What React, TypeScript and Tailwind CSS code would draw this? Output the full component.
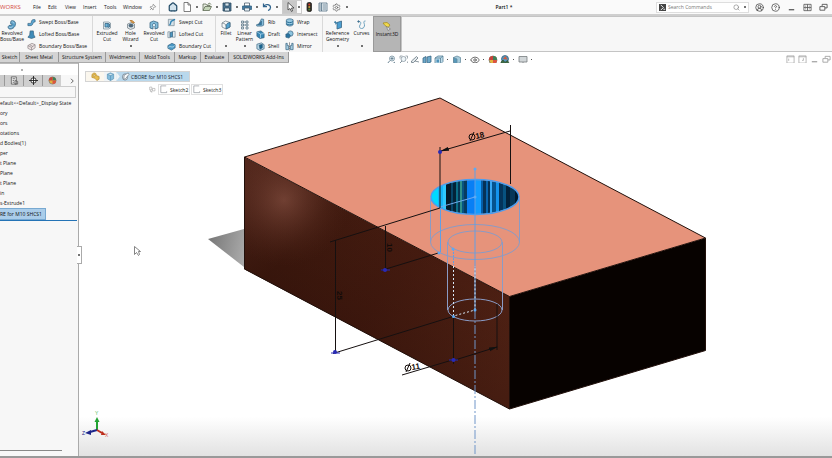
import React from "react";
import { House, Pin, Search, CircleUserRound, CircleHelp, Settings, Eye } from "lucide-react";

type Kids = { children?: React.ReactNode };

function Glyph({ children, size = "size-[10px]" }: Kids & { size?: string }) {
  return (
    <svg viewBox="0 0 20 20" className={`${size} shrink-0`} fill="none" stroke="#33607f" strokeWidth="1.5" aria-hidden="true">
      {children}
    </svg>
  );
}

const art: Record<string, React.ReactNode> = {
  revolve: (
    <>
      <path d="M8 2c5-2 10 1 9 7s-7 10-12 9c-3-1-4-5-1-7l6-1c1-2-2-2-3-3z" fill="#5c9fc6" />
      <path d="M9 4c3-1 5 1 5 3M4 14c2 2 5 1 7-1" stroke="#c6e4f5" />
    </>
  ),
  sweep: <path d="M2 17v-5h6c2 0 1-5 3-7s5-2 7-1v5c-4 0-4 1-5 4s-3 4-6 4z" fill="#5aa5d0" />,
  loft: <path d="M7 2h7l1 9 3 5-8 3-8-3 4-5z" fill="#3f8bb8" />,
  boundary: (
    <>
      <path d="M2 8l9-5 7 3v7l-8 5-8-4z" fill="#eee4e4" stroke="#8b8184" />
      <path d="M2 8l8 4 8-6M10 12v6M6 6l7 4" stroke="#8b8184" />
    </>
  ),
  extrudeCut: (
    <>
      <path d="M3 4h10l4 2v10l-4 2H3z" fill="#e6edf1" stroke="#7b8d99" />
      <path d="M6 7h6v7H6zM12 7l3 1v6l-3 1" fill="#6cb4db" />
    </>
  ),
  wizard: (
    <>
      <path d="M3 8l8-3 6 3v8l-8 3-6-3z" fill="#d9dee1" stroke="#75818a" />
      <ellipse cx="10" cy="11" rx="4" ry="3" fill="#57636d" />
      <path d="M8 1l5 5 4-1-5-4z" fill="#eda84c" stroke="#a86d26" />
    </>
  ),
  revolveCut: (
    <>
      <path d="M2 5l7-3 9 3v11l-6 2v-5H8v5l-6-2z" fill="#83bddb" />
      <path d="M8 13c-2-3-1-6 2-6s4 3 2 6" fill="#e6f4fb" />
    </>
  ),
  sweepCut: (
    <>
      <path d="M3 3h13v14H3z" fill="#d5e2e9" stroke="#71848f" />
      <path d="M5 15c4 0 2-6 5-8s4-2 8-4" stroke="#2f83b4" strokeWidth="3" />
    </>
  ),
  loftCut: (
    <>
      <path d="M2 4h5v13H2zM12 3h6v13h-6z" fill="#e6eef2" stroke="#718694" />
      <path d="M7 6l5-2v11l-5 1z" fill="#4f9bc6" />
    </>
  ),
  boundaryCut: (
    <>
      <path d="M2 8l9-5 7 3v7l-8 5-8-4z" fill="#4c9ac6" />
      <path d="M3 12c5-5 8 3 14-4" stroke="#d8eff9" />
    </>
  ),
  fillet: (
    <>
      <path d="M2 6l7-4 9 3v9l-8 4-8-4z" fill="#f4f7f8" stroke="#717f88" />
      <path d="M10 18V12c0-4 3-6 8-7v9z" fill="#55a4d1" />
      <path d="M2 6c5 1 8 2 8 6" stroke="#717f88" />
    </>
  ),
  pattern: (
    <>
      {[3, 12].map((x) => [2, 8, 14].map((y) => <path key={`${x}-${y}`} d={`M${x} ${y}h4v4h-4z`} fill="#e8eff3" stroke="#5a7384" />))}
      <path d="M7 4h5M7 10h5" stroke="#5a7384" />
    </>
  ),
  rib: (
    <>
      <path d="M12 2l5 1v13l-4 2H2l-1-3 6-2z" fill="#85bddb" />
      <path d="M5 15l7-8v8z" fill="#2c7dad" />
    </>
  ),
  draft: (
    <>
      <path d="M2 4l9-2 7 6v9l-9 2-7-5z" fill="#3686b4" />
      <path d="M2 4l8 5 8-1M10 9v9" stroke="#bfe0f1" />
    </>
  ),
  shell: (
    <>
      <path d="M2 5l10-3 6 4v9l-9 4-7-4z" fill="#b9d7e6" />
      <path d="M7 7l7-2v8l-5 3z" fill="#18658f" />
    </>
  ),
  wrap: (
    <>
      <path d="M3 4c4-3 11-3 15 0v11c-4 4-11 4-15 0z" fill="#97c8e1" />
      <path d="M3 8c5 3 10 3 15 0M3 13c5 3 10 3 15 0" stroke="#1c648d" strokeWidth="2" />
    </>
  ),
  intersect: (
    <>
      <circle cx="12" cy="8" r="6" fill="#8dc4df" />
      <path d="M2 9l6-1 4 4-3 6-7-2z" fill="#2873a0" />
    </>
  ),
  mirror: (
    <>
      <path d="M2 3h3v5h3v9H2zM18 3h-3v5h-3v9h6z" fill="#a7cde0" />
      <path d="M10 1v18" stroke="#444" strokeDasharray="3 1" />
    </>
  ),
  reference: (
    <>
      <path d="M8 5l9-3v13l-9 3z" fill="#4c9ed0" />
      <path d="M5 2v7M2 5h7M3 3l5 5" stroke="#397ba1" />
    </>
  ),
  curves: (
    <>
      <path d="M3 3c6 0 5 4 3 7s-1 7 3 7M17 2c-6 0-2 5-2 8s-1 7-6 7" stroke="#6aa0bd" strokeWidth="2" />
      <circle cx="3" cy="3" r="1.5" fill="#4c8eb3" />
    </>
  ),
  instant: (
    <>
      <path d="M2 4l8-1 6 5-4 5-6-4z" fill="#f1d94d" stroke="#a18b20" />
      <path d="M9 11l8 5-5 3z" fill="#f6f6f6" stroke="#7a7a7a" />
    </>
  ),
  page: <path d="M4 1h8l5 5v13H4zM12 1v5h5" fill="#fff" stroke="#555" />,
  open: (
    <>
      <path d="M2 17V4h6l2 3h6v3" fill="#e9eee3" stroke="#59654f" />
      <path d="M2 17l4-8h13l-4 8zM11 5l4-3 3 3" fill="#c5d6b9" stroke="#59654f" />
    </>
  ),
  save: (
    <>
      <path d="M2 2h16v16H2z" fill="#4b7695" stroke="#28465b" />
      <path d="M6 2h8v6H6zM5 12h10v6H5z" fill="#d8e5ed" stroke="#28465b" />
    </>
  ),
  print: (
    <>
      <path d="M5 2h10v6H5z" fill="#fff" stroke="#456" />
      <path d="M1 8h18v7H1z" fill="#417ba3" />
      <path d="M5 12h10v6H5z" fill="#e8f1f6" stroke="#456" />
    </>
  ),
  undo: <path d="M3 3v6h7M4 8c4-5 13-3 13 3 0 3-2 5-5 6" stroke="#31648d" strokeWidth="2.5" />,
  cursor: <path d="M6 1v15l4-3 3 6 2-1-2-6h5z" fill="#fff" stroke="#333" />,
  light: (
    <>
      <rect x="6" y="1" width="9" height="18" rx="3" fill="#332e25" stroke="#222" />
      <circle cx="10.500" cy="5" r="2" fill="#d83a2a" stroke="none" />
      <circle cx="10.500" cy="10" r="2" fill="#c39a35" stroke="none" />
      <circle cx="10.500" cy="15" r="2" fill="#4d8b40" stroke="none" />
    </>
  ),
  list: <path d="M2 2h16v16H2zM7 2v16M9 6h7M9 10h7M9 14h7M3 6h3M3 10h3M3 14h3" fill="#eef4f7" stroke="#48677c" />,
  zoomFit: (
    <>
      <circle cx="12" cy="7" r="5" fill="#e9f4f9" stroke="#6c8594" />
      <path d="M8 11l-6 7M12 4v6M9 7h6M14 17l4-3" stroke="#6c8594" strokeWidth="2" />
    </>
  ),
  zoomArea: (
    <>
      <path d="M4 7V2h5M15 2h4v5M19 13v5" stroke="#87939b" />
      <circle cx="11" cy="8" r="5" fill="#eff6f9" stroke="#84939d" />
      <path d="M8 12l-6 6" stroke="#84939d" strokeWidth="2" />
    </>
  ),
  previous: <path d="M3 12l10-9 3 3-9 9H3zM2 18h16M10 12l8 2" fill="#e3e9ec" stroke="#61717c" />,
  section: <path d="M2 6l6-3v12l-6 3zM10 4l8-2v12l-8 3z" fill="#6da9ca" />,
  cube: (
    <>
      <path d="M2 6l6-4h10v11l-5 5H2z" fill="#bfdceb" stroke="#527b92" />
      <path d="M2 6h11v12M13 6l5-4" stroke="#527b92" />
      <path d="M5 9h5v6H5z" fill="#4d92b9" stroke="none" />
    </>
  ),
  shaded: (
    <>
      <path d="M3 5l7-3 7 3v10l-7 3-7-3z" fill="#a8cddd" stroke="#66899c" />
      <path d="M3 5l7 3v10l-7-3z" fill="#5798b9" stroke="#66899c" />
    </>
  ),
  ball: (
    <>
      <circle cx="10" cy="10" r="8" fill="#e2b53e" stroke="#777" />
      <path d="M10 10V2a8 8 0 018 8z" fill="#3e7f58" stroke="none" />
      <path d="M10 10H2a8 8 0 018-8z" fill="#c9413b" stroke="none" />
      <path d="M10 10h8a8 8 0 01-8 8z" fill="#dd5440" stroke="none" />
    </>
  ),
  scene: (
    <>
      <circle cx="10" cy="8" r="7" fill="#5796bb" />
      <path d="M6 8l5-6 4 7z" fill="#d35b3d" stroke="none" />
      <path d="M2 14l4-4 4 5 5-4 4 7H2z" fill="#3d6b43" stroke="#315034" />
    </>
  ),
  monitor: <path d="M2 3h16v11H2zM10 14v4M5 18h10" fill="#d1d6d8" stroke="#707578" />,
  minimize: <path d="M4 15h12" stroke="currentColor" strokeWidth="2.5" />,
  grid: <path d="M2 3h16v14H2zM10 3v14M2 10h16M5 7h2M13 7h2M5 13h2M13 13h2" stroke="#555" strokeWidth="1.8" />,
  restore: <path d="M7 7V3h11v8h-5M2 8h11v8H2z" stroke="currentColor" strokeWidth="1.800" />,
  pane: <path d="M2 2h16v16H2zM6 8v5M2 4h16" stroke="currentColor" />,
  paneAlt: <path d="M2 2h16v16H2zM12 7v5h-3M2 4h16" stroke="currentColor" />,
  property: <path d="M3 2h11v16H3zM6 6h5M6 10h3M11 10l6 2v6h-6zM6 14h3" fill="#e9e9e9" stroke="#444" />,
  target: (
    <>
      <circle cx="10" cy="10" r="6" fill="#fff" stroke="#222" strokeWidth="2" />
      <path d="M10 0v20M0 10h20" stroke="#222" strokeWidth="2" />
    </>
  ),
  part: (
    <>
      <path d="M2 8c0-6 7-7 9-4l1 4 6 2v6l-5 3-4-5-7-2z" fill="#e8bd4e" stroke="#b28b34" />
      <circle cx="7" cy="8" r="2" fill="#fff7d8" stroke="#b28b34" />
    </>
  ),
  body: <path d="M3 5l7-3 7 3v10l-7 4-7-4zM3 5l7 3 7-3M10 8v11" fill="#86bddc" stroke="#5792b4" />,
  hole: (
    <>
      <ellipse cx="9" cy="11" rx="6" ry="7" fill="#e0e7ea" stroke="#65798a" />
      <path d="M7 7l9-5 2 3-8 10-4 1z" fill="#f8fafb" stroke="#697986" />
    </>
  ),
  sketch: <path d="M8 2H4v15h13v-3M8 2h8" stroke="#8c9299" />,
  parent: <path d="M2 3h6v8H2zM10 7h7v7h-7zM8 14v5M4 11v5h4" stroke="#9a9a9a" />,
};

function Caret() {
  return <span className="mx-auto size-[2px] shrink-0 rounded-full bg-[#444]" />;
}

function Tool({ icon, lines, width, caret = false, active = false }: { icon: string; lines: string[]; width: string; caret?: boolean; active?: boolean }) {
  return (
    <button className={`${width} flex h-full shrink-0 flex-col items-center pt-1 ${active ? "border border-[#999] bg-[#b5b5b5]" : ""}`}>
      <Glyph>{art[icon]}</Glyph>
      {lines.map((l) => (
        <span key={l} className="whitespace-nowrap leading-[6px]">{l}</span>
      ))}
      {caret && <span className="mt-auto mb-[5px] flex"><Caret /></span>}
    </button>
  );
}

function ToolStack({ items, width }: { items: [string, string][]; width: string }) {
  return (
    <div className={`${width} flex shrink-0 flex-col`}>
      {items.map(([icon, label]) => (
        <button key={label} className="flex h-3 items-center gap-[3px] whitespace-nowrap">
          <Glyph size="size-[9px]">{art[icon]}</Glyph>
          {label}
        </button>
      ))}
    </div>
  );
}

function Divider() {
  return <div className="mr-[2px] h-full w-px shrink-0 bg-[#d9d9d9]" />;
}

function QuickButton({ icon, label, caret = true }: { icon: React.ReactNode; label: string; caret?: boolean }) {
  return (
    <button aria-label={label} className={`flex h-full shrink-0 items-center ${caret ? "w-5" : "w-[14px]"}`}>
      {icon}
      {caret && <Caret />}
    </button>
  );
}

function TitleBar() {
  const menus: [string, string][] = [["File", "w-[15px]"], ["Edit", "w-[17px]"], ["View", "w-[18px]"], ["Insert", "w-[21px]"], ["Tools", "w-[19px]"], ["Window", "w-[26px]"]];
  return (
    <header className="flex h-4 items-center border-b-2 border-[#cfcfcf] bg-[#fafafa]">
      <div className="w-[33px] shrink-0 text-[6px] text-[#d4483c]">WORKS</div>
      <nav className="flex shrink-0">
        {menus.map(([m, w]) => <button key={m} className={`${w} text-left`}>{m}</button>)}
      </nav>
      <Pin className="size-[7px] shrink-0 rotate-45 text-[#666]" />
      <div className="mr-2 ml-[3px] h-full w-px shrink-0 bg-[#d5d5d5]" />
      <div className="flex h-full shrink-0 items-center">
        <QuickButton label="Home" caret={false} icon={<House className="size-[10px] fill-[#d2e2ec] text-[#254d69]" strokeWidth={3} />} />
        <QuickButton label="New" icon={<Glyph>{art.page}</Glyph>} />
        <QuickButton label="Open" icon={<Glyph>{art.open}</Glyph>} />
        <QuickButton label="Save" icon={<Glyph>{art.save}</Glyph>} />
        <QuickButton label="Print" icon={<Glyph>{art.print}</Glyph>} />
        <QuickButton label="Undo" icon={<Glyph>{art.undo}</Glyph>} />
        <button aria-label="Select" className="flex h-[14px] w-5 items-center border border-[#ccc]">
          <span className="flex h-full w-[14px] items-center justify-center bg-[#c8c8c8]"><Glyph>{art.cursor}</Glyph></span>
          <Caret />
        </button>
        <span className="w-[2px]" />
        <QuickButton label="Rebuild" caret={false} icon={<Glyph>{art.light}</Glyph>} />
        <QuickButton label="File properties" caret={false} icon={<Glyph>{art.list}</Glyph>} />
        <QuickButton label="Options" icon={<Settings className="size-[9px] text-[#666]" />} />
      </div>
      <h1 className="flex-1 text-center font-semibold">Part1 *</h1>
      <div className="mr-[6px] flex h-[11px] w-[93px] shrink-0 items-center border border-[#dedede] bg-white px-[2px]">
        <span className="flex size-[7px] items-center justify-center bg-[#444]">
          <svg viewBox="0 0 8 8" className="size-[7px]" fill="none" stroke="white" aria-hidden="true"><path d="M2 1l3 3-3 3M5 6h2" /></svg>
        </span>
        <input aria-label="Search Commands" placeholder="Search Commands" className="ml-[2px] h-2 w-0 flex-1 bg-transparent p-0 outline-none placeholder:text-[#777]" />
        <Search className="size-[7px] text-[#777]" />
        <span className="ml-1 flex"><Caret /></span>
      </div>
      <div className="flex shrink-0 items-center gap-[7px] pr-1 text-[#444]">
        <button aria-label="Account"><CircleUserRound className="size-[9px]" /></button>
        <button aria-label="Help"><CircleHelp className="size-[9px]" /></button>
        <button aria-label="Minimize"><Glyph size="size-[9px]">{art.minimize}</Glyph></button>
        <button aria-label="Arrange"><Glyph size="size-[9px]">{art.grid}</Glyph></button>
        <button aria-label="Restore"><Glyph size="size-[9px]">{art.restore}</Glyph></button>
      </div>
    </header>
  );
}

function Ribbon() {
  return (
    <div className="flex h-9 bg-[#f7f7f7]">
      <Tool icon="revolve" lines={["Revolved", "Boss/Base"]} width="w-[24px]" />
      <ToolStack width="ml-[3px] w-[65px]" items={[["sweep", "Swept Boss/Base"], ["loft", "Lofted Boss/Base"], ["boundary", "Boundary Boss/Base"]]} />
      <Divider />
      <Tool icon="extrudeCut" lines={["Extruded", "Cut"]} width="w-[24px]" />
      <Tool icon="wizard" lines={["Hole", "Wizard"]} width="w-[23px]" caret />
      <Tool icon="revolveCut" lines={["Revolved", "Cut"]} width="w-[24px]" />
      <ToolStack width="ml-px w-[48px]" items={[["sweepCut", "Swept Cut"], ["loftCut", "Lofted Cut"], ["boundaryCut", "Boundary Cut"]]} />
      <Divider />
      <Tool icon="fillet" lines={["Fillet"]} width="w-[16px]" caret />
      <Tool icon="pattern" lines={["Linear", "Pattern"]} width="w-[21px]" caret />
      <ToolStack width="ml-px w-[29px]" items={[["rib", "Rib"], ["draft", "Draft"], ["shell", "Shell"]]} />
      <ToolStack width="w-[37px]" items={[["wrap", "Wrap"], ["intersect", "Intersect"], ["mirror", "Mirror"]]} />
      <Divider />
      <Tool icon="reference" lines={["Reference", "Geometry"]} width="w-[25px]" caret />
      <Tool icon="curves" lines={["Curves"]} width="w-[23px]" caret />
      <Tool icon="instant" lines={["", "Instant3D"]} width="w-[28px]" active />
      <div className="flex-1 border-t border-b border-l border-[#c4c4c4]" />
    </div>
  );
}

function TabRow() {
  const tabs: [string, string][] = [["Sketch", "w-[20px]"], ["Sheet Metal", "w-[39px]"], ["Structure System", "w-[47px]"], ["Weldments", "w-[34px]"], ["Mold Tools", "w-[35px]"], ["Markup", "w-[26px]"], ["Evaluate", "w-[28px]"], ["SOLIDWORKS Add-Ins", "w-[60px]"]];
  const views: [string, string, boolean][] = [["zoomFit", "Zoom to fit", false], ["zoomArea", "Zoom to area", false], ["previous", "Previous view", false], ["section", "Section view", false], ["cube", "View orientation", true], ["shaded", "Display style", true], ["eye", "Hide or show items", true], ["ball", "Edit appearance", false], ["scene", "Apply scene", true], ["monitor", "View settings", true]];
  return (
    <div className="flex h-[11px]">
      <div className="flex shrink-0 border-b border-[#aaa] bg-[#d4d4d4]">
        {tabs.map(([t, w]) => (
          <button key={t} className={`${w} border-r border-[#999] text-center whitespace-nowrap`}>{t}</button>
        ))}
      </div>
      <div className="mt-[3px] ml-[97px] flex flex-1">
        {views.map(([icon, label, caret]) => (
          <button key={icon} aria-label={label} className={`${caret ? "w-[18px]" : "w-3"} flex h-[9px] items-center gap-[3px]`}>
            {icon === "eye" ? <Eye className="size-[10px] shrink-0 text-[#555]" /> : <Glyph>{art[icon]}</Glyph>}
            {caret && <span className="size-px bg-[#555]" />}
          </button>
        ))}
      </div>
      <div className="mt-[3px] flex gap-[3px] pr-px text-[#999]">
        {["pane", "paneAlt", "minimize", "restore"].map((i) => (
          <button key={i} aria-label={i} className="h-[9px]"><Glyph size="size-[9px]">{art[i]}</Glyph></button>
        ))}
      </div>
    </div>
  );
}

function FeatureTree() {
  const rows = ["ory", "ors", "otations", "d Bodies(1)", "per", "t Plane", "Plane", "t Plane", "in", "s-Extrude1"];
  return (
    <aside className="relative flex w-[79px] shrink-0 flex-col border-r border-[#aaa] bg-[#f7f7f7]">
      <div className="flex h-3 items-center border-t border-[#bbb] bg-white">
        <span className="ml-[21px] size-[2px] rounded-full bg-[#999]" />
      </div>
      <div className="flex h-[11px] items-center">
        <span className="h-full w-1 bg-[#ccc]" />
        {["property", "target", "ball"].map((i) => (
          <button key={i} aria-label={i} className="flex h-full w-[19px] items-center justify-center border-l border-[#999] bg-[#cfcfcf]">
            <Glyph size="size-[9px]">{art[i]}</Glyph>
          </button>
        ))}
        <button aria-label="More tabs" className="ml-[9px]">
          <svg viewBox="0 0 6 8" className="h-[6px] w-[5px]" fill="none" stroke="#333" aria-hidden="true"><path d="M1 1l3 3-3 3" /></svg>
        </button>
      </div>
      <div className="mr-[2px] h-3 border border-l-0 border-[#ccc]" />
      <ul className="whitespace-nowrap leading-[10px]">
        <li>efault&lt;&lt;Default&gt;_Display State</li>
        {rows.map((r, i) => <li key={i}>{r}</li>)}
        <li className="w-[46px] border border-l-0 border-[#78a9d1] bg-[#aacdea]">RE for M10 SHCS1</li>
      </ul>
      <div className="mr-px h-px bg-[#2473b6]" />
      <div className="mt-auto mb-[5px] h-px w-[62px] bg-[#888]" />
      <button aria-label="Collapse panel" className="absolute top-[183px] -right-[4px] z-10 flex h-[18px] w-[5px] items-center border border-l-0 border-[#aaa] bg-white">
        <Caret />
      </button>
    </aside>
  );
}

const strips: [number, number, string][] = [
  [430, 8, "#00d9ff"], [438, 5, "#16b4fa"], [443, 3, "#2fc8ff"], [446, 5, "#051a2b"], [451, 2, "#064569"], [453, 3, "#032338"], [456, 2, "#0b6e87"], [458, 2, "#073554"],
  [460, 2, "#2f9189"], [462, 2, "#075482"], [464, 3, "#073b61"], [467, 8, "#087ff5"], [475, 6, "#139cff"], [481, 2, "#065da7"], [483, 3, "#063258"], [486, 2, "#0a65ae"],
  [488, 2, "#053055"], [490, 2, "#37a8f5"], [492, 4, "#06538e"], [496, 3, "#1494ed"], [499, 4, "#04345b"], [503, 3, "#075280"], [506, 4, "#02213a"], [510, 5, "#073657"], [515, 5, "#01192c"],
];

function Model() {
  return (
    <svg viewBox="79 63 753 393" preserveAspectRatio="xMinYMin meet" className="absolute inset-0 h-full w-full" fill="none" role="img" aria-label="Block with a counterbored hole">
      <defs>
        <linearGradient id="side" x1="244" y1="175" x2="500" y2="390" gradientUnits="userSpaceOnUse">
          <stop offset="0" stopColor="#5b2c20" /><stop offset=".25" stopColor="#461d11" /><stop offset=".55" stopColor="#4b1e12" /><stop offset="1" stopColor="#5a2718" />
        </linearGradient>
        <radialGradient id="sheen" cx="284" cy="200" r="66" gradientUnits="userSpaceOnUse">
          <stop offset="0" stopColor="#8d5647" stopOpacity=".6" /><stop offset="1" stopColor="#57291d" stopOpacity="0" />
        </radialGradient>
        <linearGradient id="depth" x1="350" y1="215" x2="290" y2="315" gradientUnits="userSpaceOnUse">
          <stop offset="0" stopColor="#1b0702" stopOpacity=".15" /><stop offset="1" stopColor="#1b0702" stopOpacity=".4" />
        </linearGradient>
        <linearGradient id="shade" x1="208" y1="239" x2="246" y2="248" gradientUnits="userSpaceOnUse">
          <stop offset="0" stopColor="#777" /><stop offset="1" stopColor="#aaa" />
        </linearGradient>
        <clipPath id="bore"><ellipse cx="475" cy="197" rx="44" ry="17" /></clipPath>
        <marker id="arrow" markerWidth="9" markerHeight="5" refX="8" refY="2.500" orient="auto-start-reverse" markerUnits="userSpaceOnUse">
          <path d="M0 .5l9 2-9 2z" fill="#111" />
        </marker>
      </defs>

      <path d="M208 239l36-10v38z" fill="url(#shade)" />
      <path d="M244 157l265.500 139.500v112.500L244 269z" fill="url(#side)" />
      <path d="M244 157l265.500 139.500v112.500L244 269z" fill="url(#depth)" />
      <path d="M244 157l265.500 139.500v112.500L244 269z" fill="url(#sheen)" />
      <path d="M509.500 296.500L705.500 238v112.500L509.500 409z" fill="#070200" />
      <path d="M440 98l265.500 140-196 58.500L244.500 157z" fill="#e6937b" />
      <path d="M244.500 157L440 98l265.500 140v112.500L509.500 409l-265-140zM244.500 157l265 139.500V409M509.500 296.500L705.500 238" stroke="#21100b" />

      <g clipPath="url(#bore)">
        {strips.map(([x, w, c]) => <rect key={x} x={x} y="178" width={w} height="38" fill={c} />)}
      </g>
      <ellipse cx="475" cy="197" rx="44" ry="17.500" stroke="#4a9df0" strokeWidth="1.500" />

      <g stroke="#8a9bc5">
        <path d="M430.500 197v45M519.500 197v45" />
        <ellipse cx="475" cy="242" rx="44.500" ry="17.500" />
        <ellipse cx="475" cy="242" rx="27" ry="11" />
        <path d="M447.500 242v68M502.500 242v68" />
        <ellipse cx="475" cy="310" rx="27" ry="11" />
      </g>
      <path d="M475 170v140M440.500 207v45" stroke="#609fe6" />
      <path d="M475 310v146" stroke="#7196c9" strokeDasharray="9 2 2 2" />
      <path d="M475 197l-35 10" stroke="#70a9ed" />
      <path d="M453.500 249v16" stroke="#609fe6" strokeDasharray="2 1" />
      <path d="M453.500 266v50l21.500-6v-44" stroke="#d7e8f7" strokeDasharray="2 2" />

      <g stroke="#161010">
        <path d="M440 147v61M510.500 125v59M440 208l-110 34M440 252.500l-59 18M453 316.500l-120 37M453.500 317v47M497 304v46M402 375l52-15.500" strokeWidth="1" />
        <path d="M441 151l69-20M385.500 226v43M335.500 240v112M455 360l42-13" markerStart="url(#arrow)" markerEnd="url(#arrow)" />
      </g>
      <g fill="#292bb5">
        <circle cx="440" cy="152" r="2" /><circle cx="385" cy="270" r="2" /><circle cx="335" cy="352" r="2" /><circle cx="453.500" cy="360" r="2" />
      </g>
      <path d="M381 270h9M331 353h9M449 360h9" stroke="#292bb5" />
      <g fill="#5caaf4">
        <circle cx="475" cy="169" r="1.500" /><circle cx="475" cy="197" r="1.500" /><circle cx="439" cy="253" r="1.500" /><circle cx="453" cy="249" r="1.500" /><circle cx="453.500" cy="316.500" r="1.500" /><circle cx="475" cy="310" r="1.500" />
      </g>

      <g fill="#120b09" fontFamily="'Liberation Sans', sans-serif" fontSize="8" fontWeight="bold">
        <text transform="translate(476 139) rotate(-12)">18</text>
        <text transform="translate(412 370) rotate(-10)">11</text>
        <text transform="translate(387 243) rotate(90)">10</text>
        <text transform="translate(337 291) rotate(90)">25</text>
      </g>
      <g stroke="#120b09">
        <circle cx="472" cy="137" r="3" /><path d="M470 141l4-9" />
        <circle cx="408" cy="368" r="3" /><path d="M406 372l4-9" />
      </g>

      <path d="M134.500 246.500v8l2-2 2 3 1-1-1-3h2z" fill="#fff" stroke="#666" strokeWidth=".8" />

      <path d="M97 430v-9" stroke="#24a334" strokeWidth="2" /><path d="M94.500 422l2.500-5 2.500 5z" fill="#24a334" />
      <path d="M97 430l-7 2" stroke="#1d258a" strokeWidth="2" /><path d="M91 430l-6 3 6 2z" fill="#1d258a" />
      <path d="M97 430l5 3" stroke="#bd2e1d" strokeWidth="2" /><path d="M102 431l4 4-5 0z" fill="#bd2e1d" />
      <g fontFamily="'Liberation Sans', sans-serif" fontSize="5">
        <text x="95" y="415" fill="#4eb85a">Y</text><text x="82" y="435" fill="#1d258a">Z</text><text x="105" y="437" fill="#d26054">X</text>
      </g>
    </svg>
  );
}

function Viewport() {
  return (
    <main className="relative min-w-0 flex-1 bg-gradient-to-b from-white from-90% to-[#e2e2e2]">
      <Model />
      <div className="relative pt-2 pl-[6px]">
        <nav aria-label="Selection" className="flex h-[11px] w-[105px] items-center border border-[#d4d4d4] bg-[#fbf7ee]">
          <button aria-label="Part" className="flex w-[18px] justify-center"><Glyph size="size-[9px]">{art.part}</Glyph></button>
          <button aria-label="Body" className="flex h-full w-3 items-center justify-center bg-[#f0f4f6]"><Glyph size="size-[9px]">{art.body}</Glyph></button>
          <button className="flex h-full flex-1 items-center gap-px whitespace-nowrap bg-[#b9d8ec]">
            <svg viewBox="0 0 4 10" className="h-full w-1 shrink-0" aria-hidden="true"><path d="M0 0l4 5-4 5z" fill="#f0f4f6" /></svg>
            <Glyph size="size-[9px]">{art.hole}</Glyph>
            <span className="text-[#123]">CBORE for M10 SHCS1</span>
          </button>
        </nav>
        <div className="mt-[2px] ml-[64px] flex items-center">
          <Glyph size="size-[7px]">{art.parent}</Glyph>
          <div className="ml-[2px] flex gap-px">
            {["Sketch2", "Sketch3"].map((s) => (
              <button key={s} className="flex h-[11px] w-8 items-center gap-[2px] border border-[#e0e0e0] bg-white">
                <Glyph size="size-[9px]">{art.sketch}</Glyph>
                {s}
              </button>
            ))}
          </div>
        </div>
      </div>
    </main>
  );
}

export default function App() {
  return (
    <div className="flex h-screen flex-col overflow-hidden bg-white font-['Open_Sans','Noto_Sans',sans-serif] text-[5px] leading-[10px] font-medium text-[#111]">
      <TitleBar />
      <Ribbon />
      <TabRow />
      <div className="flex min-h-0 flex-1">
        <FeatureTree />
        <Viewport />
      </div>
      <footer className="h-[2px] shrink-0 bg-[#999]" />
    </div>
  );
}
